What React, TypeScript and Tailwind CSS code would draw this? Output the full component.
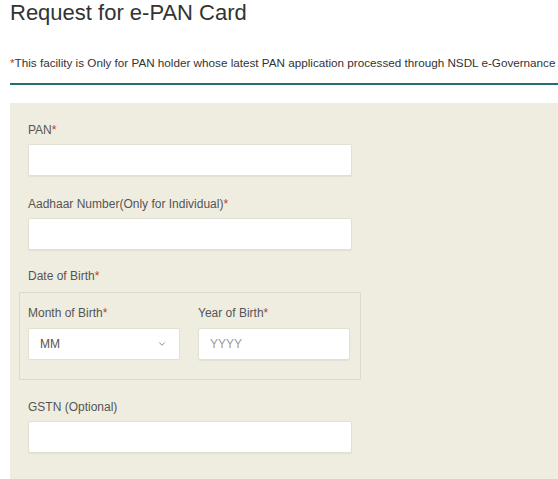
import { ChevronDown } from 'lucide-react'

const font = { fontFamily: '"Liberation Sans", Arial, sans-serif' }

function Label({ text, required }: { text: string; required?: boolean }) {
  return (
    <div className="text-[12px] leading-[16px] text-[#555]">
      {text}
      {required && <span className="text-[#c0392b]">*</span>}
    </div>
  )
}

function TextBox({ placeholder, width = 'w-[324px]' }: { placeholder?: string; width?: string }) {
  return (
    <div className={`${width} h-[32px] bg-white border border-[#e2e0d4] rounded-[2px] shadow-[0_1px_1px_rgba(0,0,0,0.05)] flex items-center px-[11px] text-[12px] text-[#999]`}>
      {placeholder}
    </div>
  )
}

export default function App() {
  return (
    <div className="w-[558px] h-[479px] overflow-hidden bg-white" style={font}>
      <h1 className="pl-[10px] text-[22px] leading-[26px] text-[#333] whitespace-nowrap">
        Request for e-PAN Card
      </h1>

      <p className="mt-[29px] pl-[10px] text-[11.7px] leading-[16px] text-[#333] whitespace-nowrap">
        <span className="text-[#c0392b]">*</span>
        This facility is Only for PAN holder whose latest PAN application processed through NSDL e-Governance
      </p>

      <div className="ml-[10px] mt-[12px] h-[2px] bg-[#21706f]" />

      <div className="ml-[10px] mt-[18px] bg-[#efede0] pl-[18px] pt-[19px] pb-[40px]">
        <Label text="PAN" required />
        <div className="mt-[6px]">
          <TextBox />
        </div>

        <div className="mt-[20px]">
          <Label text="Aadhaar Number(Only for Individual)" required />
        </div>
        <div className="mt-[6px]">
          <TextBox />
        </div>

        <div className="mt-[18px]">
          <Label text="Date of Birth" required />
        </div>

        <div className="mt-[8px] -ml-[9px] w-[342px] border border-[#dcdacd] pl-[8px] pt-[12px] pb-[19px] flex gap-[18px]">
          <div className="w-[152px]">
            <Label text="Month of Birth" required />
            <div className="mt-[7px] h-[32px] bg-white border border-[#e2e0d4] rounded-[2px] flex items-center justify-between pl-[11px] pr-[12px] text-[12px] text-[#555]">
              <span>MM</span>
              <ChevronDown className="w-[10px] h-[10px] text-[#777]" strokeWidth={2} />
            </div>
          </div>
          <div className="w-[152px]">
            <Label text="Year of Birth" required />
            <div className="mt-[7px]">
              <TextBox placeholder="YYYY" width="w-[152px]" />
            </div>
          </div>
        </div>

        <div className="mt-[19px]">
          <Label text="GSTN (Optional)" />
        </div>
        <div className="mt-[6px]">
          <TextBox />
        </div>
      </div>
    </div>
  )
}
